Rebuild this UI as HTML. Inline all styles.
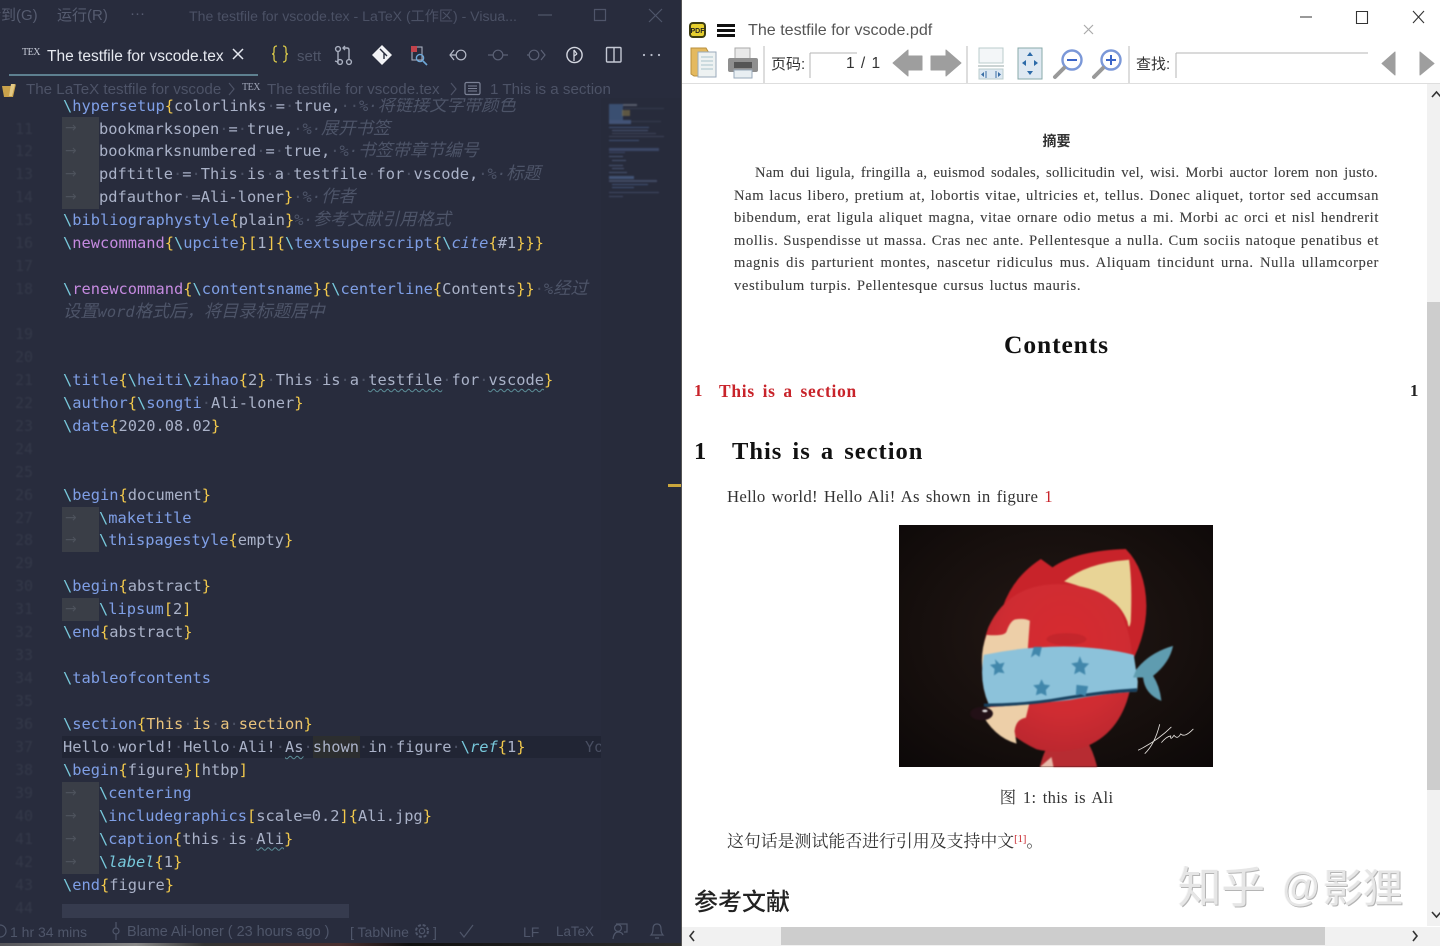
<!DOCTYPE html>
<html lang="zh"><head><meta charset="utf-8"><title>LaTeX in VS Code</title>
<style>
*{box-sizing:border-box}
html,body{margin:0;padding:0;width:1440px;height:946px;overflow:hidden;background:#fff}
body{position:relative;font-family:"Liberation Sans","Noto Sans CJK SC",sans-serif}
.a{position:absolute;white-space:pre}
#L{position:absolute;left:0;top:0;width:681px;height:946px;background:#282c3d;overflow:hidden;filter:blur(.3px)}
#R{position:absolute;left:681px;top:0;width:759px;height:946px;background:#fff;border-left:1px solid #555;overflow:hidden}
.r{position:absolute;left:63px;height:23px;line-height:23px;white-space:pre;font:15.36px/23px "DejaVu Sans Mono","Noto Sans CJK SC",monospace;color:#aab2c8}
.n{position:absolute;left:11px;width:22px;text-align:right;height:23px;font:15px/23px "DejaVu Sans Mono",monospace;color:#343949;filter:blur(.7px)}
.ig{position:absolute;left:62px;width:37px;height:23px;background:#3a3e47;color:#4d525c;font:14px/23px "DejaVu Sans",sans-serif;padding-left:3px}
.c{color:#78c9dc}.k{color:#7f9fe6}.p{color:#c58ae0}.y{color:#f2c94c}.w{color:#e8c27c}
.d{color:#4a5063}.m{color:#4d5468;font-style:italic}.m b{font:italic 400 17.3px/0 "Noto Sans CJK SC",sans-serif}
.i{font-style:italic}.sq{text-decoration:underline wavy #5c8e98 1px;text-underline-offset:3px}
.h{color:#565c70;font-size:15px;line-height:20px}
.s{color:#4f566a;font-size:14px;line-height:20px}
.bc{font-size:15.15px;line-height:20px;color:#4d5367}
.b{position:absolute;left:52px;width:645px;font:14.6px/20px "Liberation Serif","Noto Serif CJK SC",serif;color:#3c3c3c;letter-spacing:.6px;text-align:justify;text-align-last:justify;white-space:normal;-webkit-text-stroke:.1px #3c3c3c}
svg{position:absolute;overflow:visible}
#mini div{position:absolute;height:2px;opacity:.55}
</style></head><body>
<div id="L">
<div class="a" style="left:62px;top:736px;width:539px;height:22px;background:#212534"></div>
<div class="a" style="left:313px;top:736px;width:47px;height:22px;background:#2c2e2f"></div>
<div class="a" style="left:601px;top:98px;width:80px;height:822px;background:#272b3b"></div>
<div class="a" style="left:668px;top:484px;width:13px;height:3px;background:#caa63c"></div>

<div class="n" style="top:117.5px">11</div><div class="n" style="top:140.4px">12</div><div class="n" style="top:163.4px">13</div><div class="n" style="top:186.3px">14</div><div class="n" style="top:209.3px">15</div><div class="n" style="top:232.2px">16</div><div class="n" style="top:254.6px">17</div><div class="n" style="top:277.6px">18</div><div class="n" style="top:323px">19</div><div class="n" style="top:345.9px">20</div><div class="n" style="top:368.8px">21</div><div class="n" style="top:391.8px">22</div><div class="n" style="top:414.7px">23</div><div class="n" style="top:437.7px">24</div><div class="n" style="top:460.6px">25</div><div class="n" style="top:483.5px">26</div><div class="n" style="top:506.5px">27</div><div class="n" style="top:529.4px">28</div><div class="n" style="top:552.4px">29</div><div class="n" style="top:575.3px">30</div><div class="n" style="top:598.2px">31</div><div class="n" style="top:621.2px">32</div><div class="n" style="top:644.1px">33</div><div class="n" style="top:667.1px">34</div><div class="n" style="top:690px">35</div><div class="n" style="top:712.9px">36</div><div class="n" style="top:735.9px">37</div><div class="n" style="top:758.8px">38</div><div class="n" style="top:781.8px">39</div><div class="n" style="top:804.7px">40</div><div class="n" style="top:827.6px">41</div><div class="n" style="top:850.6px">42</div><div class="n" style="top:873.5px">43</div><div class="n" style="top:896.5px">44</div>

<div class="ig" style="top:117px">→</div><div class="ig" style="top:140px">→</div><div class="ig" style="top:163px">→</div><div class="ig" style="top:186px">→</div>
<div class="ig" style="top:506.5px">→</div><div class="ig" style="top:529.4px">→</div><div class="ig" style="top:598.2px">→</div>
<div class="ig" style="top:781.8px">→</div><div class="ig" style="top:804.7px">→</div><div class="ig" style="top:827.6px">→</div><div class="ig" style="top:850.6px">→</div>

<div class="r" style="top:94.6px"><span class="c">\</span><span class="k">hypersetup</span><span class="y">{</span>colorlinks<span class="d">·</span>=<span class="d">·</span>true,<span class="d">··</span><span class="m">%·<b>将链接文字带颜色</b></span></div>
<div class="r" style="top:117.5px;left:99px">bookmarksopen<span class="d">·</span>=<span class="d">·</span>true,<span class="d">·</span><span class="m">%·<b>展开书签</b></span></div>
<div class="r" style="top:140.4px;left:99px">bookmarksnumbered<span class="d">·</span>=<span class="d">·</span>true,<span class="d">·</span><span class="m">%·<b>书签带章节编号</b></span></div>
<div class="r" style="top:163.4px;left:99px">pdftitle<span class="d">·</span>=<span class="d">·</span>This<span class="d">·</span>is<span class="d">·</span>a<span class="d">·</span>testfile<span class="d">·</span>for<span class="d">·</span>vscode,<span class="d">·</span><span class="m">%·<b>标题</b></span></div>
<div class="r" style="top:186.3px;left:99px">pdfauthor<span class="d">·</span>=Ali-loner<span class="y">}</span><span class="d">·</span><span class="m">%·<b>作者</b></span></div>
<div class="r" style="top:209.3px"><span class="c">\</span><span class="k">bibliographystyle</span><span class="y">{</span>plain<span class="y">}</span><span class="m">%·<b>参考文献引用格式</b></span></div>
<div class="r" style="top:232.2px"><span class="c">\</span><span class="p">newcommand</span><span class="y">{</span><span class="c">\</span><span class="k">upcite</span><span class="y">}[</span>1<span class="y">]{</span><span class="c">\</span><span class="k">textsuperscript</span><span class="y">{</span><span class="c">\</span><span class="k i">cite</span><span class="y">{</span>#1<span class="y">}}}</span></div>
<div class="r" style="top:277.6px"><span class="c">\</span><span class="p">renewcommand</span><span class="y">{</span><span class="c">\</span><span class="k">contentsname</span><span class="y">}{</span><span class="c">\</span><span class="k">centerline</span><span class="y">{</span>Contents<span class="y">}}</span><span class="d">·</span><span class="m">%<b>经过</b></span></div>
<div class="r" style="top:300.5px"><span class="m"><b>设置</b>word<b>格式后，将目录标题居中</b></span></div>
<div class="r" style="top:368.8px"><span class="c">\</span><span class="k">title</span><span class="y">{</span><span class="c">\</span><span class="k">heiti</span><span class="c">\</span><span class="k">zihao</span><span class="y">{</span>2<span class="y">}</span><span class="d">·</span>This<span class="d">·</span>is<span class="d">·</span>a<span class="d">·</span><span class="sq">testfile</span><span class="d">·</span>for<span class="d">·</span><span class="sq">vscode</span><span class="y">}</span></div>
<div class="r" style="top:391.8px"><span class="c">\</span><span class="k">author</span><span class="y">{</span><span class="c">\</span><span class="k">songti</span><span class="d">·</span>Ali-loner<span class="y">}</span></div>
<div class="r" style="top:414.7px"><span class="c">\</span><span class="k">date</span><span class="y">{</span>2020.08.02<span class="y">}</span></div>
<div class="r" style="top:483.5px"><span class="c">\</span><span class="k">begin</span><span class="y">{</span>document<span class="y">}</span></div>
<div class="r" style="top:506.5px;left:99px"><span class="c">\</span><span class="k">maketitle</span></div>
<div class="r" style="top:529.4px;left:99px"><span class="c">\</span><span class="k">thispagestyle</span><span class="y">{</span>empty<span class="y">}</span></div>
<div class="r" style="top:575.3px"><span class="c">\</span><span class="k">begin</span><span class="y">{</span>abstract<span class="y">}</span></div>
<div class="r" style="top:598.2px;left:99px"><span class="c">\</span><span class="k">lipsum</span><span class="y">[</span>2<span class="y">]</span></div>
<div class="r" style="top:621.2px"><span class="c">\</span><span class="k">end</span><span class="y">{</span>abstract<span class="y">}</span></div>
<div class="r" style="top:667.1px"><span class="c">\</span><span class="k">tableofcontents</span></div>
<div class="r" style="top:712.9px"><span class="c">\</span><span class="k">section</span><span class="y">{</span><span class="w">This<span class="d">·</span>is<span class="d">·</span>a<span class="d">·</span>section</span><span class="y">}</span></div>
<div class="r" style="top:735.9px">Hello<span class="d">·</span>world!<span class="d">·</span>Hello<span class="d">·</span>Ali!<span class="d">·</span><span class="sq">As</span><span class="d">·</span>shown<span class="d">·</span>in<span class="d">·</span>figure<span class="d">·</span><span class="c">\</span><span class="c i">ref</span><span class="y">{</span>1<span class="y">}</span></div>
<div class="r" style="top:735.9px;left:585px;width:16px;overflow:hidden;color:#484e61">Yo</div>
<div class="r" style="top:758.8px"><span class="c">\</span><span class="k">begin</span><span class="y">{</span>figure<span class="y">}[</span>htbp<span class="y">]</span></div>
<div class="r" style="top:781.8px;left:99px"><span class="c">\</span><span class="k">centering</span></div>
<div class="r" style="top:804.7px;left:99px"><span class="c">\</span><span class="k">includegraphics</span><span class="y">[</span>scale=0.2<span class="y">]{</span>Ali.jpg<span class="y">}</span></div>
<div class="r" style="top:827.6px;left:99px"><span class="c">\</span><span class="k">caption</span><span class="y">{</span>this<span class="d">·</span>is<span class="d">·</span><span class="sq">Ali</span><span class="y">}</span></div>
<div class="r" style="top:850.6px;left:99px"><span class="c">\</span><span class="c i">label</span><span class="y">{</span>1<span class="y">}</span></div>
<div class="r" style="top:873.5px"><span class="c">\</span><span class="k">end</span><span class="y">{</span>figure<span class="y">}</span></div>
<div class="a" style="left:62px;top:904px;width:287px;height:14px;background:#363b4e"></div>

<div id="mini" style="position:absolute;left:0;top:0;filter:blur(.9px)">
<div style="left:609px;top:104px;width:14px;height:16px;background:#4b6d9f"></div><div style="left:623px;top:104px;width:14px;height:2px;background:#7f8796"></div><div style="left:624px;top:108px;width:40px;height:1px;background:#454b5f"></div><div style="left:622px;top:110px;width:8px;height:6px;background:#8d7b4a"></div><div style="left:609px;top:120px;width:22px;height:4px;background:#5a75a8"></div><div style="left:631px;top:121px;width:30px;height:1px;background:#454b5f"></div>
<div style="left:609px;top:127px;width:40px;height:1px;background:#5a75a8"></div><div style="left:612px;top:130px;width:36px;height:1px;background:#6878a4"></div><div style="left:612px;top:133px;width:44px;height:1px;background:#535a72"></div><div style="left:609px;top:136px;width:55px;height:1px;background:#535a72"></div><div style="left:609px;top:140px;width:30px;height:1px;background:#5a75a8"></div><div style="left:609px;top:148px;width:50px;height:3px;background:#4f5f8a"></div><div style="left:609px;top:152px;width:16px;height:1px;background:#4f5f8a"></div><div style="left:609px;top:156px;width:14px;height:1px;background:#6878a4"></div><div style="left:612px;top:160px;width:14px;height:1px;background:#6878a4"></div><div style="left:609px;top:165px;width:14px;height:1px;background:#6878a4"></div><div style="left:612px;top:168px;width:12px;height:1px;background:#6878a4"></div><div style="left:609px;top:172px;width:18px;height:1px;background:#6878a4"></div><div style="left:609px;top:176px;width:25px;height:3px;background:#5a75a8"></div><div style="left:609px;top:180px;width:48px;height:2px;background:#5a6788"></div><div style="left:612px;top:184px;width:36px;height:1px;background:#5a75a8"></div><div style="left:612px;top:187px;width:22px;height:1px;background:#5a75a8"></div><div style="left:609px;top:192px;width:50px;height:1px;background:#5a6788"></div><div style="left:609px;top:196px;width:14px;height:1px;background:#5a6788"></div>
</div>

<!-- title bar -->
<div class="a" style="left:0;top:0;width:681px;height:98px;background:#282c3d"></div>
<div class="a h" style="left:-14px;top:6px">转到(G)</div>
<div class="a h" style="left:57px;top:6px">运行(R)</div>
<div class="a h" style="left:130px;top:4px">···</div>
<div class="a" style="left:189px;top:5.500px;font-size:14.1px;line-height:20px;color:#4b5165">The testfile for vscode.tex - LaTeX (工作区) - Visua...</div>
<svg style="left:0;top:0" width="681" height="30" fill="none" stroke="#4f556a" stroke-width="1.2"><path d="M538 15h14M594.5 9.5h11v11h-11zM649 9l13 13M662 9l-13 13"/></svg>

<!-- tabs -->
<div class="a" style="left:22px;top:47px;font:10px/12px 'Liberation Serif',serif;color:#c8ccd8;letter-spacing:-.5px">TEX</div>
<div class="a" style="left:47px;top:47px;font-size:15.5px;line-height:20px;color:#e6e9f0">The testfile for vscode.tex</div>
<svg style="left:0;top:0" width="681" height="98" fill="none">
<path d="M233 49l10 10M243 49l-10 10" stroke="#e6e9f0" stroke-width="1.5"/>
<path d="M9 75h249" stroke="#7fb2c2" stroke-width="1.2"/>
<path d="M277 47q-3 0-3 3v3q0 2-2 2q2 0 2 2v3q0 3 3 3M283 47q3 0 3 3v3q0 2 2 2q-2 0-2 2v3q0 3-3 3" stroke="#d8c84a" stroke-width="1.3" transform="translate(0,-1)"/>
<g stroke="#aab0c0" stroke-width="1.4"><circle cx="338" cy="49" r="2.4"/><path d="M338 52v10l-3-1M338 62v-1M344 48h3q2 0 2 2v9"/><circle cx="349" cy="62" r="2.4"/><circle cx="340" cy="62" r="2.4"/><path d="M345 46l-2 2 2 2"/></g>
<path d="M382 45l10 10-10 10-10-10z" fill="#f2f3f6"/><path d="M380 49l4 4v6M384 53l3 3" stroke="#282c3d" stroke-width="1.4"/>
<rect x="412" y="47" width="10" height="13" fill="none" stroke="#a8aebf" stroke-width="1.1"/><rect x="411" y="46" width="6" height="6" fill="#c2434c"/><circle cx="420" cy="58" r="3.6" stroke="#6ea8d8" stroke-width="1.4"/><path d="M423 61l4 4" stroke="#6ea8d8" stroke-width="1.6"/>
<g stroke="#b5bac8" stroke-width="1.2"><circle cx="461" cy="55" r="4.8"/><path d="M456 55h-1M454 50l-4 5 4 5M450 55h6"/></g>
<g stroke="#5b6175" stroke-width="1.2"><circle cx="498" cy="55" r="4.8"/><path d="M488 55h5M503 55h5"/></g>
<g stroke="#5b6175" stroke-width="1.2"><circle cx="534" cy="55" r="4.8"/><path d="M527 55h2M541 50l4 5-4 5"/></g>
<circle cx="574.5" cy="55" r="7.6" stroke="#d4d7e0" stroke-width="1.4"/><path d="M574 50v11M574 50l3 4M574 56l3-2" stroke="#d4d7e0" stroke-width="1.3"/>
<rect x="606.5" y="47.5" width="14.5" height="14.5" rx="1" stroke="#c4c8d4" stroke-width="1.4"/><path d="M614 47.5v14.5" stroke="#c4c8d4" stroke-width="1.4"/>
<path d="M644 55h.01M651.5 55h.01M659 55h.01" stroke="#b9bdca" stroke-width="2.2" stroke-linecap="round"/>
</svg>
<div class="a" style="left:297px;top:47px;font-size:15px;line-height:20px;color:#4f5568">sett</div>

<!-- breadcrumb -->
<svg style="left:0;top:0" width="681" height="98" fill="none">
<path d="M2 86h11l3-2-3 13H4z" fill="#c9a24b"/><path d="M11 84h4l-3 12h-3z" fill="#e2c884"/>
<path d="M229 83l5 6-5 6M451 83l5 6-5 6" stroke="#4d5367" stroke-width="1.2"/>
<rect x="465" y="82.5" width="15" height="12" rx="1.5" stroke="#7c8296" stroke-width="1.2"/><path d="M468 86h9M468 88.5h9M468 91h9" stroke="#7c8296"/>
</svg>
<div class="a bc" style="left:26px;top:80px">The LaTeX testfile for vscode</div>
<div class="a" style="left:242px;top:82px;font:10px/12px 'Liberation Serif',serif;color:#9ea4b6;letter-spacing:-.5px">TEX</div>
<div class="a bc" style="left:267px;top:80px">The testfile for vscode.tex</div>
<div class="a bc" style="left:490px;top:80px">1 This is a section</div>

<!-- status bar -->
<div class="a" style="left:0;top:920px;width:681px;height:26px;background:#282c3d"></div>
<div class="a" style="left:0;top:943px;width:681px;height:3px;background:linear-gradient(90deg,#55555a,#888 20%,#333 30%,#4a3030 50%,#111 60%,#2d2d2d 100%)"></div>
<div class="a s" style="left:10px;top:922px">1 hr 34 mins</div>
<div class="a s" style="left:127px;top:922px;font-size:14.4px">Blame Ali-loner ( 23 hours ago )</div>
<div class="a s" style="left:350px;top:922px">[ TabNine</div>
<div class="a s" style="left:433px;top:922px">]</div>
<div class="a s" style="left:523px;top:922px">LF</div>
<div class="a s" style="left:556px;top:922px;font-size:13.4px">LaTeX</div>
<svg style="left:0;top:0" width="681" height="946" fill="none" stroke="#4f566a" stroke-width="1.2">
<path d="M0 925a6 6 0 0 1 0 12"/>
<circle cx="116" cy="931" r="3"/><path d="M116 922v6M116 934v6"/>
<circle cx="422" cy="931" r="2.6"/><circle cx="422" cy="931" r="6" stroke-dasharray="3 1.8" stroke-width="2"/>
<path d="M460 932l4 5 9-12"/>
<circle cx="618" cy="928" r="3.4"/><path d="M613 939q1-7 5-7t5 3M616 924h11v8h-3"/>
<path d="M651 935q2-2 2-6 0-5 4-5t4 5q0 4 2 6zM655 938h4"/>
</svg>
</div>

<div id="R">
<!-- coordinates below are relative to x=681 -->
<svg style="left:6px;top:21px" width="20" height="18"><rect x="1" y="1" width="17" height="16" rx="4" fill="#3d3d12"/><rect x="3" y="3" width="13" height="12" rx="2" fill="#e6cf2e"/><text x="9.5" y="12" font-family="Liberation Sans" font-size="7" font-weight="700" text-anchor="middle" fill="#222">PDF</text></svg>
<div class="a" style="left:35px;top:24px;width:18px;height:3px;background:#111"></div><div class="a" style="left:35px;top:29px;width:18px;height:3px;background:#111"></div><div class="a" style="left:35px;top:34px;width:18px;height:3px;background:#111"></div>
<div class="a" style="left:66px;top:20px;font-size:16.1px;line-height:20px;color:#555">The testfile for vscode.pdf</div>
<svg style="left:0;top:0" width="759" height="84" fill="none">
<path d="M402 25l9 9M411 25l-9 9" stroke="#aaa" stroke-width="1.2"/>
<path d="M618 17h12M674.5 11.5h11v12h-11zM731 11l11 12M742 11l-11 12" stroke="#333" stroke-width="1.1"/>
<!-- folder -->
<path d="M9 48h15l3 5v23H12l-3-2z" fill="#e4b95f" stroke="#b98f3c"/><rect x="16" y="52" width="18" height="25" fill="#eef2f2" stroke="#9ab"/><path d="M19 57h12M19 61h12M19 65h12M19 69h12" stroke="#a9c4cc"/>
<!-- printer -->
<rect x="53" y="48" width="15" height="11" fill="#e9e9e9" stroke="#aaa"/><rect x="46" y="58" width="30" height="14" rx="2" fill="#8f8f8f"/><rect x="52" y="62" width="18" height="6" fill="#555"/><rect x="52" y="70" width="18" height="8" fill="#e8eef2" stroke="#9ab"/>
<path d="M82 46v38M285 46v38M447 46v38" stroke="#bbb"/>
<path d="M128 53h47M128 53v25" stroke="#b5b5b5"/>
<path d="M211 63l15-13v6h14v14h-14v6z" fill="#9e9e9e" stroke="#9e9e9e" stroke-linejoin="round"/>
<path d="M279 63l-15-13v6h-15v14h15v6z" fill="#9e9e9e" stroke="#9e9e9e" stroke-linejoin="round"/>
<!-- fit width -->
<rect x="297" y="48" width="24" height="15" fill="#f3f6f8" stroke="#bcc"/><path d="M296 66h26" stroke="#9aa"/><rect x="297" y="69" width="24" height="10" fill="#dce8f2" stroke="#bcc"/><path d="M302 72l-3 2.5 3 2.5zM316 72l3 2.5-3 2.5z" fill="#3a6ea5"/><path d="M304 71v7M314 71v7" stroke="#3a6ea5"/>
<!-- fit page -->
<rect x="336" y="48" width="24" height="31" fill="#dfe9f2" stroke="#8aa"/><path d="M348 52l-3 4h6zM348 75l-3-4h6zM340 63l4-3v6zM356 63l-4-3v6z" fill="#2c6aa8"/>
<!-- zoom -->
<circle cx="390" cy="60" r="9.5" fill="#fff" stroke="#7b98d8" stroke-width="2.4"/><path d="M385 60h10" stroke="#3a64c8" stroke-width="2"/><path d="M382 68l-9 9" stroke="#999" stroke-width="4" stroke-linecap="round"/>
<circle cx="429" cy="60" r="9.5" fill="#fff" stroke="#7b98d8" stroke-width="2.4"/><path d="M424 60h10M429 55v10" stroke="#3a64c8" stroke-width="2"/><path d="M421 68l-9 9" stroke="#999" stroke-width="4" stroke-linecap="round"/>
<path d="M494 53h192M494 53v25" stroke="#b5b5b5"/>
<path d="M713 52v23l-13-11.5zM738 52v23l14-11.5z" fill="#9e9e9e" stroke="#9e9e9e" stroke-linejoin="round"/>
</svg>
<div class="a" style="left:89px;top:55px;font-size:15px;line-height:20px;color:#333">页码:</div>
<div class="a" style="left:164px;top:54px;font-size:15.5px;line-height:20px;color:#333;word-spacing:2px">1 / 1</div>
<div class="a" style="left:454px;top:55px;font-size:15px;line-height:20px;color:#333">查找:</div>
<div class="a" style="left:0;top:83px;width:759px;height:1px;background:#dedede"></div>

<!-- page -->
<div class="a" style="left:0;top:131px;width:749px;text-align:center;font:700 14px/20px 'Noto Sans CJK SC',sans-serif;color:#333">摘要</div>
<div class="b" style="top:163px;left:73px;width:623px;letter-spacing:.3px">Nam dui ligula, fringilla a, euismod sodales, sollicitudin vel, wisi. Morbi auctor lorem non justo.</div>
<div class="b" style="top:186px">Nam lacus libero, pretium at, lobortis vitae, ultricies et, tellus. Donec aliquet, tortor sed accumsan</div>
<div class="b" style="top:208px">bibendum, erat ligula aliquet magna, vitae ornare odio metus a mi. Morbi ac orci et nisl hendrerit</div>
<div class="b" style="top:231px">mollis. Suspendisse ut massa. Cras nec ante. Pellentesque a nulla. Cum sociis natoque penatibus et</div>
<div class="b" style="top:253px">magnis dis parturient montes, nascetur ridiculus mus. Aliquam tincidunt urna. Nulla ullamcorper</div>
<div class="a" style="left:52px;top:276px;font:14.6px/20px 'Liberation Serif',serif;color:#3c3c3c;letter-spacing:.6px;word-spacing:1.2px;-webkit-text-stroke:.1px #3c3c3c">vestibulum turpis. Pellentesque cursus luctus mauris.</div>

<div class="a" style="left:0;top:329px;width:749px;text-align:center;font:700 25.5px/32px 'Liberation Serif',serif;color:#111;letter-spacing:.9px">Contents</div>
<div class="a" style="left:12px;top:380px;font:700 16.8px/22px 'Liberation Serif',serif;color:#c8232a">1</div>
<div class="a" style="left:37px;top:380px;font:700 17.4px/22px 'Liberation Serif',serif;color:#c8232a;letter-spacing:.75px;word-spacing:2.6px">This is a section</div>
<div class="a" style="left:728px;top:380px;font:700 16.8px/22px 'Liberation Serif',serif;color:#222">1</div>
<div class="a" style="left:12px;top:436px;font:700 24.5px/32px 'Liberation Serif',serif;color:#111">1</div>
<div class="a" style="left:50px;top:436px;font:700 24.5px/32px 'Liberation Serif',serif;color:#111;letter-spacing:1px;word-spacing:3px">This is a section</div>
<div class="a" style="left:45px;top:487px;font:16.8px/20px 'Liberation Serif',serif;color:#333;word-spacing:1.6px;letter-spacing:.25px">Hello world! Hello Ali! As shown in figure <span style="color:#c8232a">1</span></div>

<svg style="left:217px;top:525px" width="314" height="242" viewBox="57 43 943 725" preserveAspectRatio="none">
<defs><radialGradient id="bg" cx=".5" cy=".45" r=".75"><stop offset="0" stop-color="#231815"/><stop offset=".6" stop-color="#160f0d"/><stop offset="1" stop-color="#0c0808"/></radialGradient>
<radialGradient id="hd" cx=".55" cy=".35" r=".7"><stop offset="0" stop-color="#d62a2f"/><stop offset=".6" stop-color="#cf2c32"/><stop offset="1" stop-color="#b8262e"/></radialGradient></defs>
<rect x="57" y="43" width="943" height="725" fill="url(#bg)"/>
<g style="filter:blur(2.5px)">
<path d="M480 768q14-60 40-80h100q20 30 32 80z" fill="#b72c32"/>
<path d="M480 768l35-30 6 30z" fill="#e6b8a8"/>
<path d="M368 290q30-90 115-145l35 25q70-50 220-55 60 60 62 170 0 90-50 180l-200-100z" fill="#c8232a"/>
<path d="M553 212q65-55 195-65 10 70 5 185-5 30-10 0-20-50-60-70-60-30-130-50z" fill="#e8d496"/>
<path d="M735 335q-30-110-200-115-150 0-210 130-25 70-15 170 20 130 160 195 60 15 140-5 110-40 140-170 20-120-15-205z" fill="url(#hd)"/>
<ellipse cx="560" cy="385" rx="60" ry="18" fill="#b92329" opacity=".6"/>
<path d="M320 372q55 5 60-10 10-30 25-36 30-5 45 4l-8 110-135 30q-5-50 13-98z" fill="#edcfa8"/>
<path d="M308 590l140-10-10 40q-30 5-34 40l6 38q-70-20-110-100z" fill="#edcfa8"/>
<path d="M312 432q120-25 240-25 120 2 210 25l12 80q-1 30-3 30-100 5-200 25-120 15-245 12-30-70-14-147z" fill="#8cc2da"/>
<path d="M312 578q130 0 240-20 120-20 220-26v10q-100 5-220 25-120 20-240 20z" fill="#17405e"/>
<path d="M770 475q40-50 110-70-10 50-60 90 20 30 25 75-50-20-55-70h-30z" fill="#5f9cb0"/>
<path d="M345 445l14 14 15-4-8 18 8 14-18-3-14 10 2-20-14-12 18-3zM462 408l24 0-7 30-12-8-14 10zM600 436l8 20 20 2-14 14 3 20-18-10-16 8 5-20-14-12 20-4zM485 505l8 16 18 2-13 14 2 18-16-8-16 6 4-18-12-12 18-2zM590 522l35 4-8 30-14-6-15 4z" fill="#4187ab"/>
<ellipse cx="305" cy="608" rx="34" ry="20" fill="#221016"/><ellipse cx="315" cy="600" rx="8" ry="4" fill="#e8e4e4"/>
</g>
<path d="M775 718q60-30 100-70M840 640q-15 60-45 88M845 695q15-18 28-20-2 15 10-2 10 14 20-4 12 12 38-15" fill="none" stroke="#e4e0dc" stroke-width="2.5"/>
</svg>

<div class="a" style="left:0;top:788px;width:749px;text-align:center;font:16.5px/20px 'Liberation Serif','Noto Serif CJK SC',serif;color:#333;word-spacing:2px;letter-spacing:.3px">图 1: this is Ali</div>
<div class="a" style="left:45px;top:829px;font:16.9px/22px 'Noto Serif CJK SC',serif;color:#333">这句话是测试能否进行引用及支持中文<sup style="font:10.5px 'Liberation Serif',serif;color:#c8232a;vertical-align:5px">[1]</sup>。</div>
<div class="a" style="left:12px;top:883px;font:500 24px/34px 'Noto Sans CJK SC',sans-serif;color:#222">参考文献</div>

<div class="a" style="left:496px;top:856px;font:400 43.5px/58px 'Noto Sans CJK SC',sans-serif;color:#e6e6e6;text-shadow:1px 1px 0 #b5b5b5,-1px 0 0 #f6f6f6">知乎</div>
<div class="a" style="left:600px;top:858px;font:400 41px/58px 'Liberation Sans',sans-serif;color:#e6e6e6;text-shadow:1px 1px 0 #b5b5b5,-1px 0 0 #f6f6f6;transform-origin:0 50%;transform:scaleX(.92)">@</div>
<div class="a" style="left:641px;top:856px;font:400 40px/58px 'Noto Sans CJK SC',sans-serif;color:#e6e6e6;text-shadow:1px 1px 0 #b5b5b5,-1px 0 0 #f6f6f6">影狸</div>

<!-- scrollbars -->
<div class="a" style="left:745px;top:84px;width:14px;height:842px;background:#f1f1f1"></div>
<div class="a" style="left:745px;top:302px;width:14px;height:488px;background:#cdcdcd"></div>
<div class="a" style="left:0;top:927px;width:759px;height:19px;background:#f1f1f1"></div>
<div class="a" style="left:99px;top:927px;width:544px;height:18px;background:#cdcdcd"></div>
<svg style="left:0;top:0" width="759" height="946" fill="none" stroke="#333" stroke-width="1.6"><path d="M750 97l4.5-5 4.5 5M750 912l4.5 5 4.5-5M12 931l-4 5 4 5M731 931l4 5-4 5"/></svg>
</div>
</body></html>
